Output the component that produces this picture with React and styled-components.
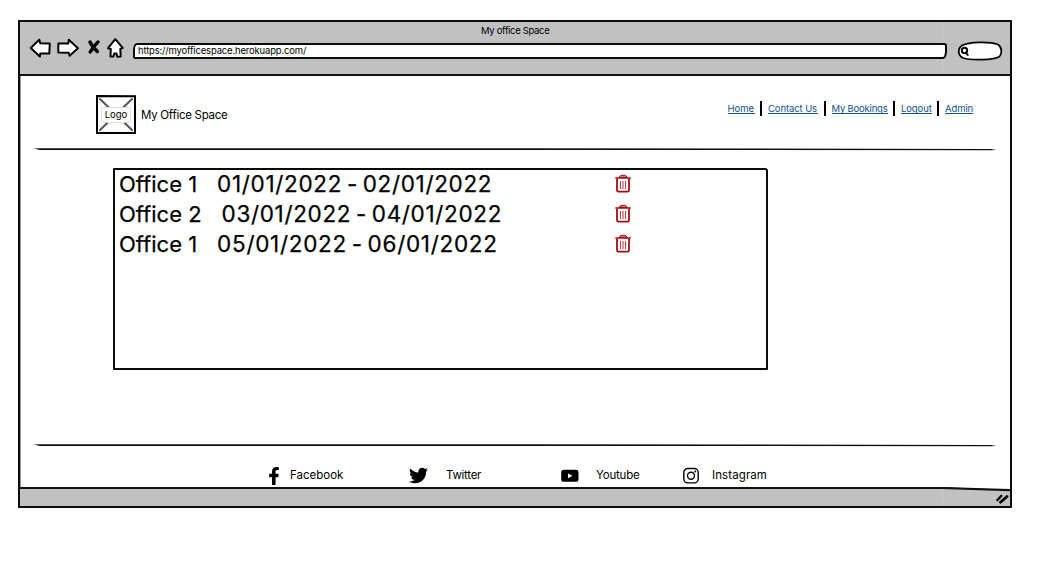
import React from "react";
import styled, { createGlobalStyle } from "styled-components";
import { FaFacebookF, FaTwitter } from "react-icons/fa";

const Global = createGlobalStyle`
  * { box-sizing: border-box; }
  body { margin: 0; background: #fff; color: #000; font-family: Inter, "Liberation Sans", sans-serif; }
  svg { display: block; flex: none; }
`;

const Browser = styled.div`
  width: 994px;
  height: 488px;
  margin: 20px 0 0 18px;
  border: 2px solid #0b0b0b;
  box-shadow: inset 1px 0 #999;
  display: flex;
  flex-direction: column;
`;

const Chrome = styled.header`
  height: 54px;
  border-bottom: 2px solid #111;
  background: linear-gradient(#c9c9c9, #c9c9c9) 922px 0 / 1px 100% no-repeat, #c1c1c1;
`;

const WindowTitle = styled.div`
  height: 15px;
  line-height: 17px;
  padding-left: 461px;
`;

const Toolbar = styled.div`
  display: flex;
  align-items: center;
  height: 22px;
  padding-left: 9px;
`;

const Address = styled.div`
  width: 814px;
  height: 16px;
  margin: 6px 10px 0 9px;
  padding-left: 3px;
  border: 2px solid #0b0b0b;
  border-radius: 4px 3px 4px 2px / 7px 3px 8px 2px;
  background: #fff;
  line-height: 12px;
`;

const Label = styled.span`
  display: block;
  font-size: ${(p) => p.$size}px;
  letter-spacing: ${(p) => p.$track || 0}px;
  white-space: pre;
`;

const BookingLabel = styled(Label)`
  word-spacing: ${(p) => p.$word || 0}px;
  -webkit-text-stroke: 0.25px #000;
`;

const Page = styled.main`
  flex: 1;
  display: flex;
  flex-direction: column;
`;

const SiteHeader = styled.div`
  display: flex;
  height: 72px;
  padding: 19px 37px 0 76px;
  justify-content: space-between;
`;

const Brand = styled.div`
  display: flex;
  gap: 5px;
  height: 39px;
  align-items: center;
`;

const LogoBox = styled.div`
  display: grid;
  width: 40px;
  height: 39px;
  place-items: center;
  > * { grid-area: 1 / 1; }
`;

const LogoTag = styled.div`
  z-index: 1;
  width: 30px;
  height: 16px;
  border: 1px solid #ddd;
  border-radius: 3px;
  background: #fff;
  text-align: center;
  line-height: 13px;
`;

const Nav = styled.nav`
  display: flex;
  height: 16px;
  margin-top: 6px;
`;

const NavLink = styled.a`
  width: ${(p) => p.$width}px;
  height: 13px;
  border-bottom: 1px solid #14508a;
  color: #14508a;
  line-height: 15px;
`;

const Divider = styled.span`
  width: 2px;
  height: 15px;
  margin: 0 5.75px;
  background: #000;
`;

const Bookings = styled.section`
  width: 655px;
  height: 202px;
  margin: 17px 0 0 93px;
  border: 2px solid #0b0b0b;
  border-radius: 1px 3px 1px 1px;
`;

const Booking = styled.div`
  display: flex;
  align-items: center;
  height: 30px;
  padding: 0 0 3px 4px;
`;

const BookingText = styled.div`
  display: flex;
  align-items: center;
  width: 496px;
  gap: 20px;
`;

const Spacer = styled.div`
  flex: 1;
`;

const RuleLine = styled.svg`
  margin-left: 14px;
`;

const Footer = styled.footer`
  display: flex;
  height: 40px;
  padding: 7px 0 0 245px;
`;

const Social = styled.div`
  display: flex;
  align-items: center;
  height: 42px;
  width: ${(p) => p.$width}px;
  gap: ${(p) => p.$gap}px;
`;

const FacebookIcon = styled(FaFacebookF)`
  margin-top: 2px;
`;

const TwitterIcon = styled(FaTwitter)`
  margin-top: 1px;
`;

const StatusBar = styled.div`
  position: relative;
  display: flex;
  height: 19px;
  padding: 5px 1px 0 0;
  justify-content: flex-end;
  border-top: 2px solid #111;
  background: linear-gradient(#c9c9c9, #c9c9c9) 922px 0 / 1px 100% no-repeat, #c1c1c1;
`;

const SaggingEdge = styled.svg`
  position: absolute;
  top: -2px;
  right: 0;
`;

const Rule = () => (
  <RuleLine width="962" height="3" viewBox="0 0 962 3">
    <path d="M0 .5L5 .3H480L957 .9l5 1.2-5 .1L480 2 6 1.900z" fill="#111" />
  </RuleLine>
);

const NavIcons = () => (
  <svg width="95" height="22" viewBox="0 0 95 22" fill="#fff" stroke="#050505" strokeWidth="2" strokeLinejoin="round" strokeLinecap="round">
    <path d="M1.700 11L10.300 2.600l.9 3.700 9.600.3-.5 9.800-9 .2-.4 3z" />
    <path d="M29.300 6.600l10-.2.5-3.600 9.200 8.400-8.400 7.600-.9-3-10.400-.2z" />
    <path d="M61 5c1.500 3.500 4 6 7.300 9.500M69 5c-3 2.700-5.500 6-7.800 10" strokeWidth="3.500" />
    <path d="M79 11.200L86.300 2.200l7.400 8.700-2.400 1 .4 7.500-3.400.3-.8-3.200-2.200-.1-.9 3.200-2.900-.2.300-7.400z" />
  </svg>
);

const SearchBox = styled.svg`
  margin-top: 5px;
`;

const Search = () => (
  <SearchBox width="46" height="22" viewBox="0 0 46 22" fill="none" stroke="#050505" strokeWidth="1.8" strokeLinecap="round">
    <path d="M5 5.500C12 1.500 33 1.300 41 4.500c4.200 2.500 4.200 9 1.500 12C37 20.300 14 20.500 6 18 .5 15 .5 8.500 5 5.500z" fill="#fff" />
    <circle cx="7.500" cy="10.500" r="2.700" strokeWidth="2" />
    <path d="M8.700 12.700l2 2.200" strokeWidth="2" />
  </SearchBox>
);

const Trash = () => (
  <svg width="16" height="20" viewBox="0 0 16 20" fill="none" stroke="#a50d12" strokeWidth="1.500">
    <path d="M4 3.500Q5.500 1 7 1.300h2.500Q11 1 12.200 3.500z" fill="#c97c7e" strokeWidth="1" />
    <path d="M.300 4h15.400" />
    <path d="M2 4.500V16q0 1.600 1.300 1.600h9.400q1.300 0 1.300-1.600V4.500" strokeWidth="1.800" strokeLinejoin="round" />
    <path d="M5.500 7V15M8 7V15M10.500 7V15" stroke="#b74448" strokeWidth="1.100" />
  </svg>
);

const Youtube = () => (
  <svg width="18" height="13" viewBox="0 0 18 13">
    <rect x=".2" y=".8" width="17.300" height="12" rx="2.600" />
    <path d="M7 4.400v4.800l4.500-2.400z" fill="#fff" />
  </svg>
);

const Instagram = () => (
  <svg width="16" height="17" viewBox="0 0 16 17" fill="none" stroke="#000" strokeWidth="1.400">
    <rect x=".8" y="1.500" width="14.400" height="14.400" rx="4" />
    <circle cx="8" cy="8.700" r="3.500" />
    <circle cx="12.200" cy="4.500" r="1" fill="#000" stroke="none" />
  </svg>
);

const Placeholder = () => (
  <svg width="40" height="39" viewBox="0 0 40 39" fill="none">
    <path d="M4 4l32 31M36 4L4 35" stroke="#555" strokeWidth="2" strokeLinecap="round" />
    <path d="M1 1l38 .2v36.800L1 38z" stroke="#000" strokeWidth="2" />
  </svg>
);

const Grip = () => (
  <svg width="13" height="10" viewBox="0 0 13 10" fill="none" stroke="#000" strokeLinecap="round">
    <path d="M1.300 6.300l4-4.500" strokeWidth="2.200" />
    <path d="M4.500 8.200l6.500-5.700" strokeWidth="2.800" />
  </svg>
);

const links = [
  ["Home", 27, 0],
  ["Contact Us", 50, -0.1],
  ["My Bookings", 56, -0.2],
  ["Logout", 30.5, -0.1],
  ["Admin", 28, -0.1],
];

const bookings = [
  ["Office 1", "01/01/2022 - 02/01/2022", 0.67],
  ["Office 2", "03/01/2022 - 04/01/2022", 0.66],
  ["Office 1", "05/01/2022 - 06/01/2022", 0.7],
];

export default function App() {
  return (
    <>
      <Global />
      <Browser>
        <Chrome>
          <WindowTitle><Label $size={9.5} $track={-0.32}>My office Space</Label></WindowTitle>
          <Toolbar>
            <NavIcons />
            <Address><Label $size={9.5} $track={-0.18}>https://myofficespace.herokuapp.com/</Label></Address>
            <Search />
          </Toolbar>
        </Chrome>
        <Page>
          <SiteHeader>
            <Brand>
              <LogoBox>
                <Placeholder />
                <LogoTag><Label $size={9.5}>Logo</Label></LogoTag>
              </LogoBox>
              <Label $size={11.5} $track={-0.27}>My Office Space</Label>
            </Brand>
            <Nav>
              {links.map(([text, width, track], i) => (
                <React.Fragment key={text}>
                  {i > 0 && <Divider />}
                  <NavLink $width={width}><Label $size={9.5} $track={track}>{text}</Label></NavLink>
                </React.Fragment>
              ))}
            </Nav>
          </SiteHeader>
          <Rule />
          <Bookings>
            {bookings.map(([office, dates, track], i) => (
              <Booking key={i}>
                <BookingText>
                  <BookingLabel $size={22}>{office}</BookingLabel>
                  <BookingLabel $size={22.5} $track={track} $word={-2.2}>{dates}</BookingLabel>
                </BookingText>
                <Trash />
              </Booking>
            ))}
          </Bookings>
          <Spacer />
          <Rule />
          <Footer>
            <Social $width={144} $gap={7}><FacebookIcon size={18} /><Label $size={11.5}>Facebook</Label></Social>
            <Social $width={152} $gap={18}><TwitterIcon size={19} /><Label $size={11.5} $track={-0.28}>Twitter</Label></Social>
            <Social $width={122} $gap={17}><Youtube /><Label $size={11.5} $track={-0.2}>Youtube</Label></Social>
            <Social $width={90} $gap={13}><Instagram /><Label $size={11.5} $track={0.1}>Instagram</Label></Social>
          </Footer>
        </Page>
        <StatusBar>
          <SaggingEdge width="68" height="5" viewBox="0 0 68 5">
            <path d="M0 0h68v3z" fill="#fff" />
            <path d="M0 0L68 2v2.300L0 2z" fill="#111" />
          </SaggingEdge>
          <Grip />
        </StatusBar>
      </Browser>
    </>
  );
}
